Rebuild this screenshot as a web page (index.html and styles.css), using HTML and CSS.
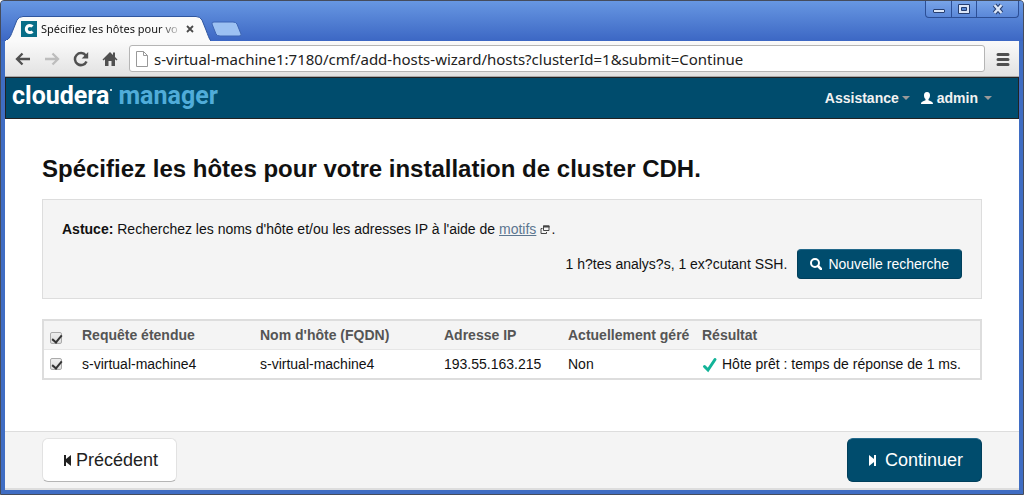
FILE: index.html
```html
<!DOCTYPE html>
<html lang="fr">
<head>
<meta charset="utf-8">
<meta name="viewport" content="width=device-width, initial-scale=1">
<title>Spécifiez les hôtes pour votre installation</title>
<link rel="stylesheet" href="styles.css">
</head>
<body>
<div class="window">
  <div class="titlebar">
    <div class="tabs">
      <div class="tab">
        <svg class="tab-shape" viewBox="0 0 206 25" preserveAspectRatio="none" aria-hidden="true"><path d="M0 25C5 23 6 19 8 14L12 4Q14 .5 18 .5H191Q195 .5 197 4L201 14C203 19 204 23 206 25Z" fill="#fafafa" stroke="#2f569f"/><path d="M1 24H205V25H1Z" fill="#fafafa"/></svg>
        <svg class="favicon" viewBox="0 0 16 16" aria-hidden="true"><path d="M0 0H16V16H0Z" fill="#086e88"/><path d="M11.500 5.500A3.600 3.600 0 1 0 11.500 10.500" fill="none" stroke="#fff" stroke-width="3"/></svg>
        <span class="tab-title">Spécifiez les hôtes pour vo</span>
        <button class="tab-close" type="button" aria-label="Fermer l'onglet"><svg viewBox="0 0 8 8"><path d="M1 1L7 7M7 1L1 7" stroke="#4b4b4b" stroke-width="1.800"/></svg></button>
      </div>
      <button class="new-tab" type="button" aria-label="Nouvel onglet"><svg viewBox="0 0 32 16"><path d="M3 1H22Q25 1 26 3L30 13Q31 15 28 15H9Q6 15 5 13L1 3Q.5 1 3 1Z" fill="#9cc1f2" stroke="#3c64b4"/></svg></button>
    </div>
    <div class="controls">
      <button type="button" aria-label="Réduire"><svg viewBox="0 0 14 12"><path d="M2 6.500H12Q12.500 6.500 12.500 7V9Q12.500 9.500 12 9.500H2Q1.500 9.500 1.500 9V7Q1.500 6.500 2 6.500Z" fill="#dbe6f8" stroke="#263e70"/></svg></button>
      <button type="button" aria-label="Agrandir"><svg viewBox="0 0 14 12"><path d="M1.500 1.500H12.500V10.500H1.500Z" fill="#dbe6f8" stroke="#263e70"/><path d="M4.500 4.500H9.500V7.500H4.500Z" fill="#5687d3" stroke="#263e70"/></svg></button>
      <button class="close" type="button" aria-label="Fermer"><svg viewBox="0 0 14 12"><path d="M3.500 2L10.500 10M10.500 2L3.500 10" stroke="#263e70" stroke-width="4.500"/><path d="M3.500 2L10.500 10M10.500 2L3.500 10" stroke="#dbe6f8" stroke-width="2.500"/></svg></button>
    </div>
  </div>
  <div class="toolbar">
    <button type="button" aria-label="Précédent"><svg viewBox="0 0 16 16"><path d="M15 8H2M7.500 2.500L2 8L7.500 13.500" fill="none" stroke="#505050" stroke-width="2.300"/></svg></button>
    <button type="button" aria-label="Suivant"><svg viewBox="0 0 16 16"><path d="M1 8H14M8.500 2.500L14 8L8.500 13.500" fill="none" stroke="#bdbdbd" stroke-width="2.300"/></svg></button>
    <button type="button" aria-label="Actualiser"><svg viewBox="0 0 16 16"><path d="M12.800 4.500A6 6 0 1 0 13.500 10.500" fill="none" stroke="#505050" stroke-width="2.500"/><path d="M15.200 1V7.500H8.700Z" fill="#505050"/></svg></button>
    <button type="button" aria-label="Accueil"><svg viewBox="0 0 16 16"><path d="M0.500 8.500L8 1L11 4V1.500H13V6L15.500 8.500L14.500 9.500L13 8.300V15H9.500V10H6.500V15H3V8.300L1.500 9.500Z" fill="#505050"/></svg></button>
    <label class="address">
      <svg viewBox="0 0 12 16" aria-hidden="true"><path d="M.5 .5H7.500L11.500 4.500V15.500H.5ZM7.500 .5V4.500H11.500" fill="#fff" stroke="#999"/></svg>
      <input type="text" aria-label="Adresse" value="s-virtual-machine1:7180/cmf/add-hosts-wizard/hosts?clusterId=1&amp;submit=Continue">
    </label>
    <button class="menu" type="button" aria-label="Menu"><svg viewBox="0 0 16 16"><path d="M3 3.500H13M3 8.500H13M3 13.500H13" stroke="#505050" stroke-width="3" stroke-linecap="round"/></svg></button>
  </div>
  <div class="page">
    <header class="app-header">
      <div class="logo"><span class="brand">cloudera<i class="mark"></i></span><span class="product">manager</span></div>
      <nav class="nav">
        <a href="#">Assistance<i class="caret"></i></a>
        <a href="#"><svg class="user" viewBox="0 0 12 12" aria-hidden="true"><path d="M6 0C8.200 0 9 1.500 9 3.500C9 5 8.300 6.500 7.500 7V8.300C8.500 9.300 12 9.200 12 12H0C0 9.200 3.500 9.300 4.500 8.300V7C3.700 6.500 3 5 3 3.500C3 1.500 3.800 0 6 0Z" fill="#fff"/></svg>admin<i class="caret spaced"></i></a>
      </nav>
    </header>
    <main class="content">
      <h1>Spécifiez les hôtes pour votre installation de cluster CDH.</h1>
      <section class="hint">
        <p><strong>Astuce:</strong> Recherchez les noms d'hôte et/ou les adresses IP à l'aide de <a href="#">motifs</a> <svg class="popup" viewBox="0 0 10 9" aria-hidden="true"><path d="M3.500 1H9V5.500H3.500Z" fill="none" stroke="#444"/><path d="M3 1.500H9.500" stroke="#444" stroke-width="2"/><path d="M2.500 3.500H1V8.500H6.500V7" fill="none" stroke="#444"/></svg>&#8202;.</p>
        <div class="search">
          <span>1 h?tes analys?s, 1 ex?cutant SSH.</span>
          <button class="primary" type="button"><svg viewBox="0 0 12 12" aria-hidden="true"><circle cx="5" cy="5" r="4" fill="none" stroke="#fff" stroke-width="2"/><path d="M8 8L11 11" stroke="#fff" stroke-width="2.500" stroke-linecap="round"/></svg>Nouvelle recherche</button>
        </div>
      </section>
      <table class="hosts">
        <colgroup><col class="c-check"><col class="c-query"><col class="c-name"><col class="c-ip"><col class="c-managed"><col></colgroup>
        <thead><tr><th><input type="checkbox" aria-label="Tout sélectionner" checked></th><th>Requête étendue</th><th>Nom d'hôte (FQDN)</th><th>Adresse IP</th><th>Actuellement géré</th><th>Résultat</th></tr></thead>
        <tbody><tr><td><input type="checkbox" aria-label="Sélectionner s-virtual-machine4" checked></td><td>s-virtual-machine4</td><td>s-virtual-machine4</td><td>193.55.163.215</td><td>Non</td><td><svg class="ok" viewBox="0 0 16 16" aria-hidden="true"><path d="M2.500 9.500L6 13L13 2.500" fill="none" stroke="#12b398" stroke-width="3" stroke-linecap="round"/></svg>Hôte prêt : temps de réponse de 1 ms.</td></tr></tbody>
      </table>
    </main>
    <footer class="actions">
      <button class="step" type="button"><svg viewBox="0 0 8 12" aria-hidden="true"><path d="M0 1H2V5L7 1V12L2 8V12H0Z" fill="#222"/></svg>Précédent</button>
      <button class="step next" type="button"><svg viewBox="0 0 8 12" aria-hidden="true"><path d="M7 1H5V5L0 1V12L5 8V12H7Z" fill="#fff"/></svg>Continuer</button>
    </footer>
  </div>
</div>
</body>
</html>
```

FILE: styles.css
```css
* { box-sizing: border-box; }
body {
  margin: 0;
  font-family: "Liberation Sans", Arial, sans-serif;
  font-size: 14px;
  line-height: 20px;
  color: #111;
}
button { font: inherit; margin: 0; padding: 0; border: 0; background: none; cursor: pointer; }
svg { display: block; }

.window {
  min-height: 100vh;
  display: flex;
  flex-direction: column;
  padding: 0 4px 4px;
  background: #3f6dc3;
  border: 1px solid #454c5c;
  border-radius: 4px 4px 0 0;
}
.titlebar {
  display: flex;
  justify-content: space-between;
  align-items: flex-end;
  height: 40px;
  margin: 0 -4px;
  padding: 0 4px;
  background: linear-gradient(#6797e2, #3c67c4);
  border-radius: 3px 3px 0 0;
}
.tabs { display: flex; align-items: flex-end; }
.tab {
  position: relative;
  display: flex;
  align-items: center;
  width: 206px;
  height: 25px;
  padding: 0 10px 0 16px;
}
.tab-shape { position: absolute; inset: 0; width: 100%; height: 100%; }
.favicon { position: relative; width: 16px; height: 16px; flex: none; }
.tab-title {
  position: relative;
  width: 139px;
  margin-left: 4px;
  white-space: nowrap;
  font: 11px/18px "Noto Sans", "Open Sans", sans-serif;
  color: transparent;
  background: linear-gradient(90deg, #111 85%, #ddd);
  -webkit-background-clip: text;
  background-clip: text;
}
.tab-close { position: relative; margin-left: 6px; }
.tab-close svg { width: 8px; height: 8px; }
.new-tab { margin-bottom: 4px; }
.new-tab svg { width: 32px; height: 16px; }
.controls {
  display: flex;
  align-self: flex-start;
  border: 1px solid #2c4f96;
  border-top: 0;
  border-radius: 0 0 4px 4px;
  background: linear-gradient(#78a4e8, #5a87d8);
}
.controls button { display: flex; justify-content: center; align-items: center; width: 25px; height: 16px; }
.controls button + button { border-left: 1px solid #2c4f96; }
.controls .close { width: 42px; }
.controls svg { width: 14px; height: 12px; }

.toolbar {
  display: flex;
  align-items: center;
  gap: 13px;
  height: 36px;
  padding: 0 8px 0 10px;
  background: linear-gradient(#fafafa, #e2e2e2);
  border-bottom: 1px solid #a9a9a9;
}
.toolbar svg { width: 16px; height: 16px; }
.address {
  flex: 1;
  display: flex;
  align-items: center;
  gap: 6px;
  height: 27px;
  margin-left: -2px;
  padding-left: 6px;
  border: 1px solid #b5b5b5;
  border-radius: 3px;
  background: #fff;
}
.address svg { width: 12px; height: 16px; }
.address input {
  flex: 1;
  min-width: 0;
  height: 20px;
  padding: 0;
  border: 0;
  outline: 0;
  background: none;
  font: 15px/20px "Noto Sans", "Open Sans", sans-serif;
  color: #222;
}
.menu { margin-left: -3px; }

.page {
  flex: 1;
  display: flex;
  flex-direction: column;
  background: #fff;
  border-bottom: 2px solid #ddd;
}
.app-header {
  display: flex;
  justify-content: space-between;
  align-items: center;
  height: 42px;
  padding: 0 26px 0 6px;
  background: #004c6d;
  border: 1px solid #222;
}
.logo { display: flex; gap: 6px; padding-bottom: 4px; font: 700 25px/30px Roboto, sans-serif; }
.brand { display: flex; color: #fff; }
.mark { width: 2px; height: 2px; margin: 8px 0 0 1px; border-radius: 50%; background: #fff; }
.product { color: #50acd9; }
.nav { display: flex; gap: 11px; font-weight: 700; }
.nav a { display: flex; align-items: center; color: #f2f2f2; text-decoration: none; }
.user { width: 12px; height: 12px; margin-right: 4px; }
.caret { margin-left: 3px; border: 4px solid transparent; border-top-color: #999; border-bottom: 0; }
.caret.spaced { margin-left: 6px; }

.content { flex: 1; padding: 32px 37px; }
h1 { margin: 0 0 12px; font-size: 24px; line-height: 36px; }
.hint { margin-bottom: 20px; padding: 19px; background: #f4f4f4; border: 1px solid #ddd; }
.hint p { margin: 0 0 10px; }
.hint a { color: #5c7690; }
.popup { display: inline-block; width: 10px; height: 9px; }
.search { display: flex; justify-content: flex-end; align-items: center; gap: 10px; }
.primary {
  display: flex;
  align-items: center;
  gap: 6px;
  height: 30px;
  padding: 0 12px;
  color: #fff;
  background: #004c6d;
  border: 1px solid #003f5b;
  border-top-color: #22688a;
  border-radius: 4px;
}
.primary svg { width: 12px; height: 12px; }

.hosts { width: 100%; table-layout: fixed; border: 2px solid #ddd; border-collapse: separate; border-spacing: 0; }
.hosts th, .hosts td { height: 28px; padding: 4px 0; text-align: left; vertical-align: middle; white-space: nowrap; }
.hosts th { color: #555; background: #f4f4f4; border-bottom: 1px solid #e6e6e6; }
.hosts th:first-child, .hosts td:first-child { padding-left: 6px; }
.hosts th:first-child { padding-top: 10px; }
.c-check { width: 38px; }
.c-query { width: 178px; }
.c-name { width: 184px; }
.c-ip { width: 124px; }
.c-managed { width: 134px; }
.hosts input {
  appearance: none;
  display: block;
  width: 12px;
  height: 12px;
  margin: 0;
  border: 1px solid #aaa;
  border-radius: 2px;
  background: linear-gradient(#eee, #ddd);
}
.hosts input:checked::after {
  content: "";
  display: block;
  width: 4px;
  height: 8px;
  margin: 0 0 0 3px;
  border: solid #333;
  border-width: 0 2px 2px 0;
  transform: rotate(40deg);
}
.ok { display: inline-block; width: 16px; height: 16px; margin-right: 4px; vertical-align: middle; }

.actions {
  display: flex;
  justify-content: space-between;
  align-items: center;
  padding: 6px 37px;
  background: #f4f4f4;
  border-top: 1px solid #ddd;
}
.step {
  display: flex;
  align-items: center;
  gap: 4px;
  height: 44px;
  padding: 0 18px 0 21px;
  font-size: 18px;
  color: #222;
  background: #fff;
  border: 1px solid #e2e2e2;
  border-bottom-color: #b5b5b5;
  border-radius: 6px;
}
.step svg { width: 8px; height: 12px; }
.next {
  gap: 8px;
  color: #fff;
  background: #004c6d;
  border-color: #003f5b;
  border-top-color: #22688a;
}
```
